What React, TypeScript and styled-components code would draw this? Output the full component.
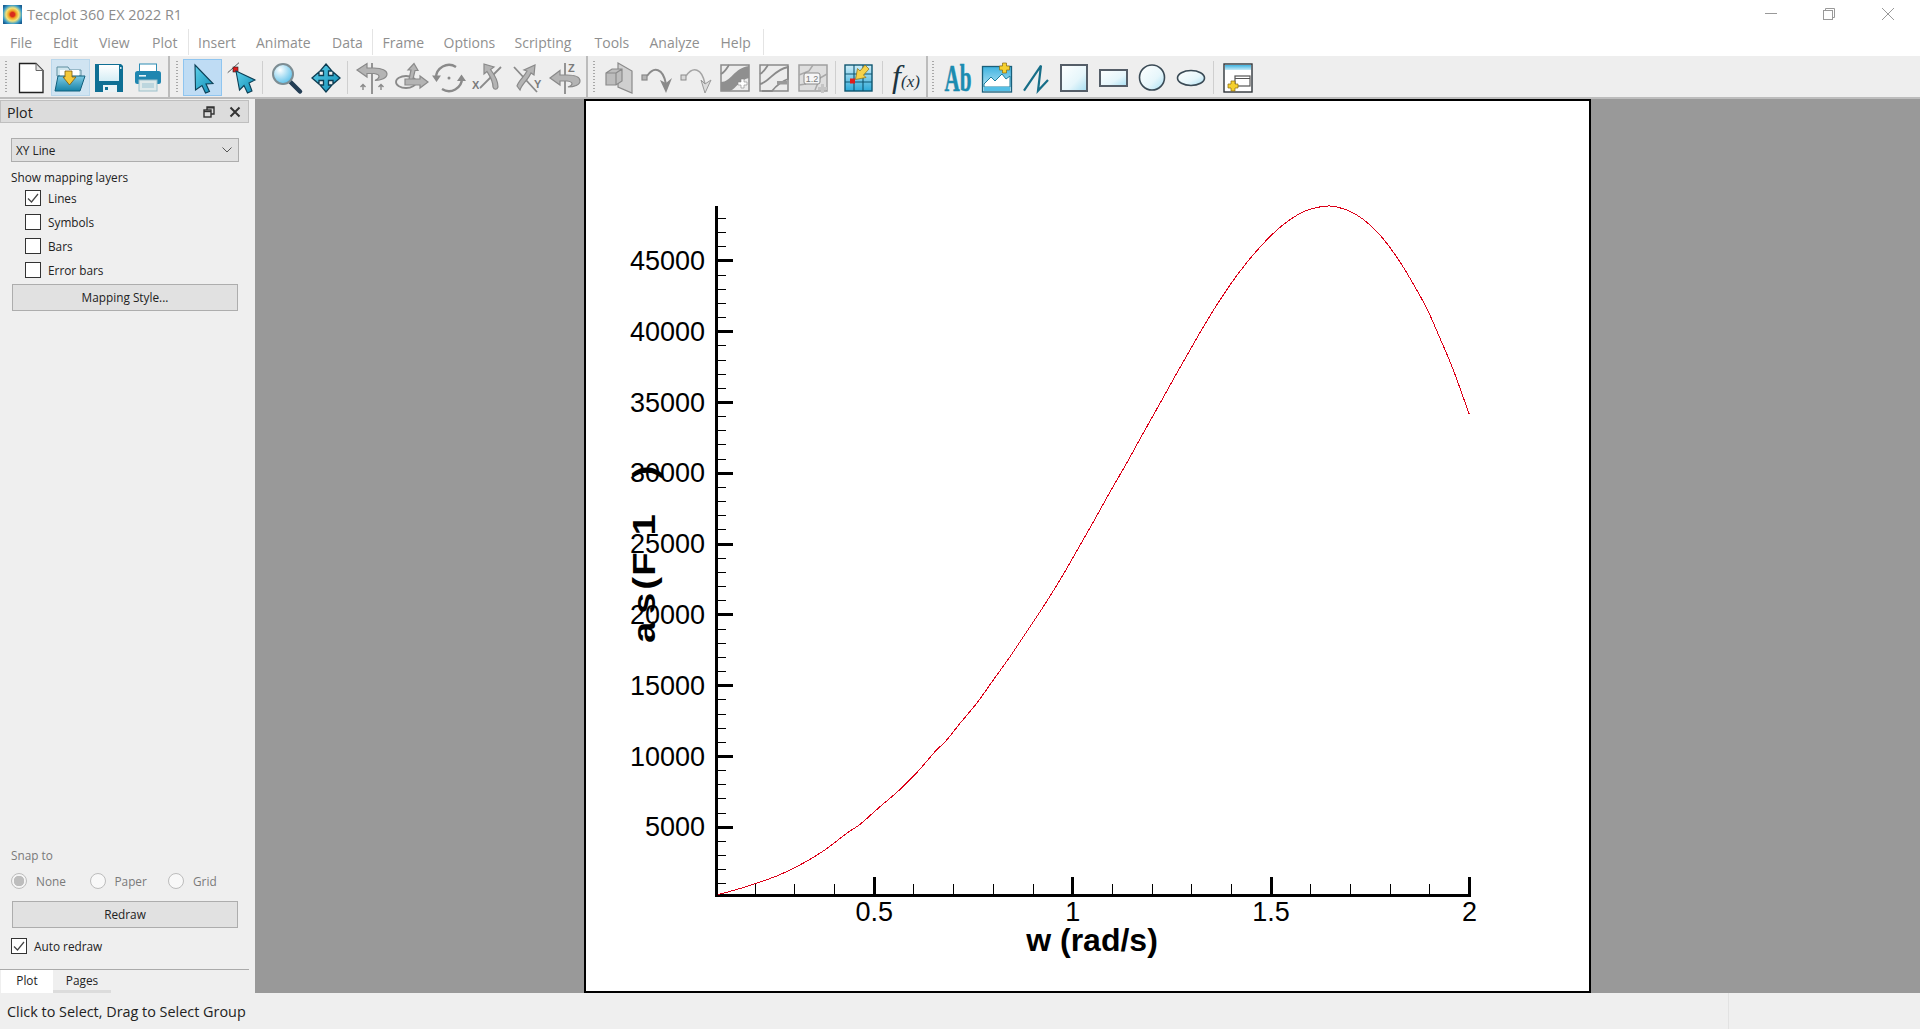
import { ReactElement, ReactNode } from 'react';
import styled, { createGlobalStyle } from 'styled-components';

const GlobalStyle = createGlobalStyle`
  html, body {
    margin: 0;
    padding: 0;
    background: #efefef;
    overflow: hidden;
  }
  * { box-sizing: border-box; }
`;

const UI_FONT = `"Open Sans", "Noto Sans", "Liberation Sans", sans-serif`;

const Window = styled.div`
  color: #222;
  display: flex;
  flex-direction: column;
  font-family: ${UI_FONT};
  height: 1029px;
  overflow: hidden;
  width: 1920px;
`;

/* title bar */
const TitleBar = styled.div`
  align-items: center;
  background: #fff;
  display: flex;
  height: 28px;
  padding-left: 3px;
`;
const AppTitle = styled.span`
  color: #8c8c8c;
  font-size: 14.4px;
  margin-left: 5px;
`;
const WindowButtons = styled.div`
  display: flex;
  margin-left: auto;
  padding-right: 3px;
`;
const WindowButton = styled.div`
  align-items: center;
  display: flex;
  height: 28px;
  justify-content: center;
  width: 58.5px;
`;

/* menu */
const MenuBar = styled.div`
  align-items: center;
  background: #fff;
  display: flex;
  height: 28px;
  padding-left: 10px;
`;
const MenuItem = styled.span<{ $width: number }>`
  color: #8f8f8f;
  font-size: 14px;
  width: ${(p) => p.$width}px;
`;
const MenuSep = styled.span<{ $after: number }>`
  align-self: stretch;
  background: #e4e4e4;
  margin: 1px ${(p) => p.$after}px 1px 0;
  width: 1px;
`;

/* toolbars */
const ToolArea = styled.div`
  background: #eee;
  border-bottom: 2px solid #bcbcbc;
  display: flex;
  height: 43px;
`;
const Bar = styled.div<{ $width?: number; $lead: number }>`
  align-items: center;
  border-right: ${(p) => (p.$width ? '2px solid #bcbcbc' : 'none')};
  display: flex;
  flex: none;
  padding: 2px 0 0 ${(p) => p.$lead}px;
  width: ${(p) => (p.$width ? `${p.$width}px` : 'auto')};
`;
const Handle = styled.span`
  background: repeating-linear-gradient(#a8a8a8 0 1px, transparent 1px 3px);
  flex: none;
  height: 33px;
  margin-right: 5px;
  width: 2px;
`;
const Group = styled.div<{ $pitch: number }>`
  display: flex;
  & > * { width: ${(p) => p.$pitch}px; }
`;
const ToolButton = styled.div<{ $tone?: 'hot' | 'on' }>`
  align-items: center;
  background: ${(p) => (p.$tone === 'on' ? '#bfdcf4' : p.$tone === 'hot' ? '#d0e4f2' : 'transparent')};
  border: 1px solid ${(p) => (p.$tone === 'on' ? '#8fc5f0' : p.$tone === 'hot' ? '#b9d7ec' : 'transparent')};
  display: flex;
  flex: none;
  height: 37px;
  justify-content: center;
`;
const ToolSep = styled.span<{ $before: number; $after: number }>`
  background: #cfcfcf;
  flex: none;
  height: 33px;
  margin: 0 ${(p) => p.$after}px 0 ${(p) => p.$before}px;
  width: 1px;
`;
const Glyph = styled.svg.attrs({ viewBox: '0 0 36 36' })`
  flex: none;
  height: 36px;
  overflow: visible;
  width: 36px;
`;
const IconDefs = styled.svg`
  height: 0;
  position: absolute;
  width: 0;
`;

/* body */
const Body = styled.div`
  display: flex;
  flex: 1;
  min-height: 0;
`;
const Panel = styled.aside`
  background: #efefef;
  display: flex;
  flex: none;
  flex-direction: column;
  font-size: 11.8px;
  padding-right: 6px;
  width: 255px;
`;
const PanelHead = styled.div`
  align-items: center;
  background: #dcdcdc;
  border: 1px solid #bfbfbf;
  display: flex;
  font-size: 14.2px;
  height: 23px;
  margin-top: 1px;
  padding: 1px 7px 0 6px;
`;
const PanelHeadIcons = styled.div`
  align-items: center;
  display: flex;
  gap: 14.5px;
  margin-left: auto;
`;
const Combo = styled.div`
  align-items: center;
  background: #e1e1e1;
  border: 1px solid #adadad;
  display: flex;
  height: 24px;
  justify-content: space-between;
  margin: 15px 10px 0 11px;
  padding: 0 6px 0 4px;
`;
const Caption = styled.div<{ $dim?: boolean; $top: number }>`
  color: ${(p) => (p.$dim ? '#7a7a7a' : '#222')};
  height: 16px;
  line-height: 15px;
  margin: ${(p) => p.$top}px 0 0 11px;
`;
const LayerList = styled.div`
  display: flex;
  flex-direction: column;
  margin-left: 25px;
`;
const CheckRow = styled.label<{ $gap: number }>`
  align-items: center;
  display: flex;
  gap: ${(p) => p.$gap}px;
  height: 24px;
`;
const Box = styled.span`
  align-items: center;
  background: #fff;
  border: 1px solid #333;
  display: flex;
  flex: none;
  height: 16px;
  justify-content: center;
  width: 16px;
`;
const PushButton = styled.div<{ $top: number }>`
  align-items: center;
  background: #e1e1e1;
  border: 1px solid #adadad;
  display: flex;
  flex: none;
  height: 27px;
  justify-content: center;
  margin: ${(p) => p.$top}px 11px 0 12px;
  padding-bottom: 2px;
`;
const SnapSection = styled.div`
  display: flex;
  flex-direction: column;
  margin-top: auto;
`;
const RadioRow = styled.div`
  display: grid;
  grid-template-columns: repeat(3, 78.5px);
  height: 16px;
  margin: 9px 0 0 11px;
`;
const RadioItem = styled.label`
  align-items: center;
  color: #7a7a7a;
  display: flex;
  gap: 9px;
`;
const RadioDot = styled.span<{ $on?: boolean }>`
  background: ${(p) => (p.$on ? 'radial-gradient(circle, #bdbdbd 0 5px, #f4f4f4 5.5px)' : '#f8f8f8')};
  border: 1px solid #bcbcbc;
  border-radius: 50%;
  flex: none;
  height: 16px;
  width: 16px;
`;
const AutoRow = styled(CheckRow)`
  height: 16px;
  margin: 10px 0 0 11px;
`;
const TabRow = styled.div`
  border-top: 1px solid #aaa;
  display: flex;
  height: 24px;
  margin-top: 15px;
  padding-left: 1px;
`;
const Tab = styled.div<{ $current?: boolean; $width: number }>`
  align-items: center;
  background: ${(p) => (p.$current ? '#fff' : 'transparent')};
  border-bottom: 3px solid ${(p) => (p.$current ? '#fff' : '#dcdcdc')};
  display: flex;
  justify-content: center;
  width: ${(p) => p.$width}px;
`;

/* plot canvas */
const Canvas = styled.main`
  background: #999;
  flex: 1;
  padding-left: 329px;
`;
const Frame = styled.div`
  background: #fff;
  border: 2px solid #000;
  height: 100%;
  width: 1007px;
`;
const PlotSvg = styled.svg`
  display: block;
`;

/* status */
const StatusBar = styled.footer`
  align-items: center;
  background: #efefef;
  display: flex;
  font-size: 14.4px;
  height: 36px;
  padding-left: 7px;
`;
const StatusCell = styled.span`
  flex: none;
  width: 1721px;
`;
const StatusRest = styled.span`
  align-self: stretch;
  border-left: 1px solid #e2e2e2;
  flex: 1;
`;

const CURVE = [
  [718, 894.5], [735, 890], [753.3, 884.3], [776.7, 876], [796.7, 866.7], [823.3, 851], [846.7, 833.3],
  [860, 824.3], [880, 806.7], [898.3, 791], [916.7, 772.7], [935, 751.7], [946.7, 740], [960, 723.3],
  [976.7, 703.3], [993.3, 680], [1010, 656.7], [1026.7, 631.7], [1043.3, 606.7], [1060, 580],
  [1076.7, 551], [1093.3, 522], [1110, 492], [1126.7, 463], [1143.3, 433], [1160, 403.3],
  [1176.7, 373.3], [1193.3, 344.2], [1207.7, 319.7], [1220, 300], [1238.3, 273.5], [1258.3, 249],
  [1280, 227.3], [1300, 213.3], [1315, 208], [1330, 206], [1346.7, 210], [1363.3, 219.3], [1380, 235],
  [1396.7, 257], [1410, 278.3], [1426.7, 308.3], [1440, 338.3], [1453.3, 370], [1469.3, 414.3],
];

// smooth the read-off points so the line has no kinks
const curvePath = (pts: number[][]): string => {
  let d = `M${pts[0][0]} ${pts[0][1]}`;
  for (let i = 0; i < pts.length - 1; i++) {
    const a = pts[Math.max(i - 1, 0)];
    const b = pts[i];
    const c = pts[i + 1];
    const e = pts[Math.min(i + 2, pts.length - 1)];
    d += `C${b[0] + (c[0] - a[0]) / 6} ${b[1] + (c[1] - a[1]) / 6} ${c[0] - (e[0] - b[0]) / 6} ${c[1] - (e[1] - b[1]) / 6} ${c[0]} ${c[1]}`;
  }
  return d;
};

const yOf = (v: number) => 827.3 - ((v - 5000) / 5000) * 70.8;
const xOf = (w: number) => 874.3 + (w - 0.5) * 396.8;
const Y_MAJOR = [5000, 10000, 15000, 20000, 25000, 30000, 35000, 40000, 45000];
const Y_MINOR = Array.from({ length: 48 }, (_, i) => (i + 1) * 1000).filter((v) => v % 5000 !== 0);
const X_MINOR = [0.2, 0.3, 0.4, 0.6, 0.7, 0.8, 0.9, 1.1, 1.2, 1.3, 1.4, 1.6, 1.7, 1.8, 1.9];
const X_MAJOR: [number, string][] = [[0.5, '0.5'], [1, '1'], [1.5, '1.5'], [2, '2']];

function Plot(): ReactElement {
  return (
    <PlotSvg width="1003" height="890" viewBox="586 101 1003 890" fontFamily='"Liberation Sans", Arial, sans-serif'>
      <g stroke="#000" shapeRendering="crispEdges">
        <line x1="716.5" y1="206" x2="716.5" y2="897" strokeWidth="3" />
        <line x1="715" y1="895.5" x2="1471" y2="895.5" strokeWidth="3" />
        {Y_MINOR.map((v) => <line key={v} x1="717" y1={yOf(v)} x2="726" y2={yOf(v)} strokeWidth="1" />)}
        {Y_MAJOR.map((v) => <line key={v} x1="717" y1={yOf(v)} x2="733" y2={yOf(v)} strokeWidth="3" />)}
        {X_MINOR.map((w) => <line key={w} x1={xOf(w)} y1="884" x2={xOf(w)} y2="895" strokeWidth="1" />)}
        {X_MAJOR.map(([w]) => <line key={w} x1={xOf(w)} y1="877" x2={xOf(w)} y2="895" strokeWidth="3" />)}
      </g>
      <path fill="none" stroke="#dc0018" strokeWidth="1" shapeRendering="crispEdges" d={curvePath(CURVE)} />
      <g fontSize="27" fill="#000">
        {Y_MAJOR.map((v) => <text key={v} x="705" y={yOf(v) + 9} textAnchor="end">{v}</text>)}
        {X_MAJOR.map(([w, label]) => <text key={w} x={xOf(w)} y="920.5" textAnchor="middle">{label}</text>)}
      </g>
      <text x="1092" y="951" fontSize="32" fontWeight="700" textAnchor="middle">w (rad/s)</text>
      <text transform="translate(655 643) rotate(-90) scale(1.2 1)" fontSize="32" fontWeight="700" dx="0 6.3 2.5 1 14 29.7">as(F1)</text>
    </PlotSvg>
  );
}

const G = { fill: '#b4b4b4', stroke: '#8a8a8a', strokeWidth: 1.2 };
const L = { fill: 'none', stroke: '#8a8a8a', strokeWidth: 1.8 };
const AX = { fontFamily: '"Liberation Sans", sans-serif', fontSize: 11, fontWeight: 700, fill: '#7a7a7a' };

const ICONS: Record<string, ReactNode> = {
  new: (
    <>
      <path d="M6.5 3.5H23L30 10.5V32.5H6.5Z" fill="#fff" stroke="#222" strokeWidth="1.3" />
      <path d="M23 3.5V10.5H30Z" fill="#e4e4e4" stroke="#666" />
    </>
  ),
  open: (
    <>
      <path d="M5 7H16L18 10H29V16H5Z" fill="#cfe6ee" stroke="#5f8ea0" />
      <path d="M8 10H27V18H8Z" fill="#fff" />
      <path d="M6 16H33L28 31H3Z" fill="url(#teal)" stroke="#13607d" />
      <path d="M13 11H20V17H24L17.5 25L11 17H13Z" fill="#f5c93a" stroke="#7a5a10" strokeWidth=".8" />
    </>
  ),
  save: (
    <>
      <path d="M4 4H30L32 6V32H4Z" fill="#0f6f94" />
      <rect x="8" y="5" width="20" height="16" fill="url(#pale)" />
      <rect x="12" y="25" width="14" height="7" fill="#eaf3f6" />
      <rect x="14" y="27" width="3" height="3" fill="#0f6f94" />
      <rect x="29" y="7" width="1.5" height="2" fill="#cfe6ee" />
    </>
  ),
  print: (
    <>
      <rect x="9.5" y="4" width="17" height="8" fill="#fff" stroke="#2c8cb4" />
      <rect x="5" y="11" width="26" height="13" rx="2.5" fill="#1f86b0" />
      <rect x="9" y="15" width="7" height="1.6" fill="#e8f4f8" />
      <rect x="9" y="20" width="18" height="11" fill="#dfe9ea" stroke="#9cc0cb" />
      <rect x="12" y="23" width="12" height="5" fill="#bcd6de" />
    </>
  ),
  pointer: <path d="M10 5L28 23.5L21 24L24.5 31.5L20.5 33L17 25.5L10.5 30Z" fill="url(#cursor)" stroke="#0c3f55" strokeWidth="1.1" />,
  adjust: (
    <>
      <path d="M3.7 12.7L15 2.7" stroke="#444" strokeWidth=".9" />
      <rect x="9" y="7" width="5" height="5" fill="#e01c1c" stroke="#222" strokeWidth=".6" />
      <path d="M12 11L31 20L25 23L28 31L23.5 33L20 25.5L15.5 30Z" fill="url(#cursor)" stroke="#0c3f55" strokeWidth="1.1" />
    </>
  ),
  zoom: (
    <>
      <path d="M21.5 22L31 31.5" stroke="#243e55" strokeWidth="4.5" strokeLinecap="round" />
      <circle cx="14" cy="14" r="10" fill="url(#lens)" stroke="#7d8d93" strokeWidth="2" />
    </>
  ),
  move: <path d="M18 4L24 11H20.5V15.5H25V12L32 18L25 24V20.5H20.5V25H24L18 32L12 25H15.5V20.5H11V24L4 18L11 12V15.5H15.5V11H12Z" fill="url(#cursor)" stroke="#0d3c52" strokeWidth="1.3" />,
  rotP: (
    <>
      <path d="M18 3V34" {...L} />
      <path d="M3 10L13 3.5V8H20C28 8 33 10.5 33 14C33 18 27 20.5 21 20.5C26 18 27 14.5 20 13.5H13V17Z" {...G} />
      <path d="M9 30V25M6.5 27L9 24.5L11.5 27M27 30V25M24.5 27L27 24.5L29.5 27" {...L} strokeWidth="1.4" />
    </>
  ),
  rotT: (
    <>
      <ellipse cx="13" cy="22" rx="10" ry="6" {...L} />
      <path d="M15 24L18 10H15L21 3.5L25 10.5H22L19 23Z" {...G} />
      <path d="M12 19H27V16L35 22L27 28V25H12Z" {...G} />
    </>
  ),
  rotR: (
    <>
      <circle cx="18" cy="18" r="1.5" fill="#8a8a8a" />
      <path d="M5 18A13 13 0 0 1 25 7" {...L} strokeWidth="2.4" />
      <path d="M31 18A13 13 0 0 1 11 29" {...L} strokeWidth="2.4" />
      <path d="M1 15.5H10L5.5 22ZM26 21H35L30.5 14.5Z" fill="#8a8a8a" />
    </>
  ),
  rotX: (
    <>
      <path d="M10 28L31 7" {...L} />
      <path d="M14 4L24 7L20.5 9.5C24 14 28 20 28 27C27 30 24 30 23 27C23 20 19 15 17 11.5L14 14Z" {...G} />
      <text x="2" y="29" {...AX}>X</text>
    </>
  ),
  rotY: (
    <>
      <path d="M5 7L28 32" {...L} />
      <path d="M8 26C10 20 15 17 18 11L15 10L26 5L25 15L22 13C19 20 13 24 11 30Z" {...G} />
      <text x="25" y="28" {...AX}>Y</text>
    </>
  ),
  rotZ: (
    <>
      <path d="M18 3V34" {...L} />
      <path d="M3 18L13 10.5V15H20C28 15 33 17 33 21C33 25 27 27 21 27C26 25 27 22 20 21H13V25Z" {...G} />
      <text x="21" y="12" {...AX}>Z</text>
    </>
  ),
  slice: (
    <>
      <path d="M17 3L31 11V33L17 27Z" fill="#cfcfcf" stroke="#8a8a8a" strokeWidth="1.2" />
      <path d="M5 13L11 9H21V21L15 25H5ZM5 13H15V25M15 13L21 9" {...G} fill="#bdbdbd" />
    </>
  ),
  stepB: (
    <>
      <rect x="2" y="15" width="5" height="5" {...G} />
      <path d="M7 16C14 6 23 8 26 24" {...L} strokeWidth="2" />
      <path d="M20 20L26 33L32 18L26 23Z" fill="#8a8a8a" />
    </>
  ),
  stepL: (
    <>
      <rect x="2" y="15" width="5" height="5" fill="#d8d8d8" stroke="#8a8a8a" />
      <path d="M7 16C14 6 23 8 26 24" {...L} strokeWidth="1.5" stroke="#a4a4a4" />
      <path d="M22 20L26 33L32 20L26 24Z" fill="#dcdcdc" stroke="#9a9a9a" />
    </>
  ),
  levAdd: (
    <>
      <rect x="4" y="5" width="28" height="26" fill="#ececec" stroke="#8a8a8a" strokeWidth="1.5" />
      <path d="M4 22C14 22 17 8 32 6V18C22 20 20 28 13 31H4Z" fill="#8f8f8f" />
      <path d="M4 14C8 12 10 8 12 5" {...L} />
      <path d="M24 19H27V22H30V25H27V28H24V25H21V22H24Z" fill="#fff" stroke="#888" strokeWidth=".6" />
    </>
  ),
  levDel: (
    <>
      <rect x="4" y="5" width="28" height="26" fill="#ececec" stroke="#8a8a8a" strokeWidth="1.5" />
      <path d="M4 14C8 12 10 8 12 5M4 24C14 22 17 10 32 7V19C24 22 20 26 16 31H6" {...L} />
      <rect x="21" y="21" width="10" height="3.5" fill="#9a9a9a" />
    </>
  ),
  levNum: (
    <>
      <rect x="4" y="5" width="28" height="26" fill="#dedede" stroke="#a0a0a0" strokeWidth="1.5" />
      <path d="M4 15L14 11L18 5M20 30L25 18L32 14M4 25L11 24" fill="none" stroke="#a8a8a8" strokeWidth="1.5" />
      <rect x="9" y="13" width="16" height="11" rx="2" fill="#f6f6f6" stroke="#8a8a8a" />
      <text x="17" y="22" textAnchor="middle" fontFamily='"Liberation Sans", sans-serif' fontSize="9" fill="#7a7a7a">1.2</text>
      <path d="M26 24H29V27H32V30H29V33H26V30H23V27H26Z" fill="#c4c4c4" />
    </>
  ),
  probe: (
    <>
      <rect x="4" y="5" width="27" height="26" fill="url(#grid)" stroke="#0f5670" strokeWidth="1.4" />
      <path d="M4 14H31M4 22H31M13 5V31M22 5V31" stroke="#0f5670" strokeWidth="1.1" />
      <path d="M28 9L24 5L19 11L16.5 8.5L14.5 19.5L25 17.5L22.5 15Z" fill="#f5d24a" stroke="#8a6a10" strokeWidth=".7" />
      <rect x="9" y="18.5" width="5" height="5" fill="#e01c1c" />
    </>
  ),
  fx: (
    <text fontFamily='"Liberation Serif", serif' fontStyle="italic" fill="#1c3440">
      <tspan x="5" y="27" fontSize="32">f</tspan>
      <tspan x="14" y="27" fontSize="17">(x)</tspan>
    </text>
  ),
  text: <text x="4.5" y="31" fontFamily='"Liberation Serif", serif' fontWeight="700" fontSize="37" fill="#1c8cb0" stroke="#1c8cb0" strokeWidth=".6" textLength="27" lengthAdjust="spacingAndGlyphs">Ab</text>,
  image: (
    <>
      <rect x="3.5" y="6.5" width="29" height="25.5" fill="url(#sky)" stroke="#1a5f7a" strokeWidth="1.3" />
      <path d="M5 24L12 17L16 21L23 14L27 19L31 16V27H5Z" fill="#fff" stroke="#1a7f9f" strokeWidth="1" />
      <path d="M5 27H31V31H5Z" fill="#54bfe6" />
      <path d="M23.5 3H27.5V6H30.5V10H27.5V13H23.5V10H20.5V6H23.5Z" fill="#f5d02f" stroke="#8a6a10" strokeWidth=".7" />
    </>
  ),
  line: <path d="M6 30.7L23 5.7L20 30.7L30 20" fill="none" stroke="#176e88" strokeWidth="2.2" />,
  square: <rect x="5" y="5" width="26" height="26" fill="url(#shape)" stroke="#555e68" strokeWidth="2" />,
  rect: <rect x="5" y="10" width="27" height="16" fill="url(#shape)" stroke="#555e68" strokeWidth="2" />,
  circle: <circle cx="18" cy="17.5" r="12.5" fill="url(#shape)" stroke="#3a4a55" strokeWidth="1.6" />,
  ellipse: <ellipse cx="18" cy="18" rx="13.5" ry="7.5" fill="url(#shape)" stroke="#3a4a55" strokeWidth="1.6" />,
  frame: (
    <>
      <rect x="4" y="4" width="28" height="28" fill="#fff" stroke="#30363b" strokeWidth="1.4" />
      <rect x="5" y="5" width="26" height="5" fill="url(#sky)" />
      <rect x="15" y="16" width="15" height="10" fill="#fff" stroke="#555" strokeWidth="1.2" />
      <path d="M15 18.5H30" stroke="#555" />
      <path d="M11 21H15V24H18V28H15V31H11V28H8V24H11Z" fill="#f5d02f" stroke="#8a6a10" strokeWidth=".7" />
    </>
  ),
};

function Tool({ name, tone }: { name: string; tone?: 'hot' | 'on' }): ReactElement {
  return (
    <ToolButton $tone={tone}>
      <Glyph>{ICONS[name]}</Glyph>
    </ToolButton>
  );
}

function Check(): ReactElement {
  return (
    <svg width="12" height="10" viewBox="0 0 12 10">
      <path d="M1 5.5L4.5 9L11 1" fill="none" stroke="#444" strokeWidth="1.2" />
    </svg>
  );
}

const MENUS_A: [string, number][] = [['File', 43], ['Edit', 46], ['View', 53], ['Plot', 35.5]];
const MENUS_B: [string, number][] = [['Insert', 58], ['Animate', 76], ['Data', 40]];
const MENUS_C: [string, number][] = [['Frame', 61], ['Options', 71], ['Scripting', 80], ['Tools', 55], ['Analyze', 71], ['Help', 42]];

export default function App(): ReactElement {
  return (
    <Window>
      <GlobalStyle />
      <IconDefs>
        <defs>
          <linearGradient id="teal" x1="0" y1="0" x2="0" y2="1"><stop offset="0" stopColor="#7fcbe4" /><stop offset="1" stopColor="#1682a8" /></linearGradient>
          <linearGradient id="pale" x1="0" y1="0" x2="0" y2="1"><stop offset="0" stopColor="#fff" /><stop offset="1" stopColor="#d5edf5" /></linearGradient>
          <linearGradient id="cursor" x1="0" y1="0" x2="1" y2="1"><stop offset="0" stopColor="#5fd0ea" /><stop offset="1" stopColor="#0f8db5" /></linearGradient>
          <radialGradient id="lens" cx=".35" cy=".3" r=".8"><stop offset="0" stopColor="#fff" /><stop offset="1" stopColor="#4dbbe8" /></radialGradient>
          <linearGradient id="grid" x1="0" y1="0" x2="0" y2="1"><stop offset="0" stopColor="#cfeef9" /><stop offset="1" stopColor="#2ba9d8" /></linearGradient>
          <linearGradient id="sky" x1="0" y1="0" x2="0" y2="1"><stop offset="0" stopColor="#3fb3e0" /><stop offset="1" stopColor="#c9ecf8" /></linearGradient>
          <linearGradient id="shape" x1="0" y1="0" x2="1" y2="1"><stop offset="0" stopColor="#fff" /><stop offset=".6" stopColor="#e6f6fb" /><stop offset="1" stopColor="#a6def2" /></linearGradient>
          <radialGradient id="logo" cx=".5" cy=".5" r=".62"><stop offset=".18" stopColor="#d92b1c" /><stop offset=".32" stopColor="#f0a020" /><stop offset=".55" stopColor="#f2e27a" /><stop offset=".8" stopColor="#3b9dc9" /><stop offset="1" stopColor="#1a5f93" /></radialGradient>
        </defs>
      </IconDefs>

      <TitleBar>
        <svg width="19" height="19" viewBox="0 0 19 19"><rect width="19" height="19" fill="url(#logo)" /></svg>
        <AppTitle>Tecplot 360 EX 2022 R1</AppTitle>
        <WindowButtons>
          <WindowButton>
            <svg width="12" height="12" viewBox="0 0 12 12"><path d="M0 5.5H12" stroke="#999" /></svg>
          </WindowButton>
          <WindowButton>
            <svg width="12" height="12" viewBox="0 0 12 12" fill="none" stroke="#999"><rect x=".5" y="2.5" width="9" height="9" /><path d="M2.5 2.5V.5H11.5V9.5H9.5" /></svg>
          </WindowButton>
          <WindowButton>
            <svg width="12" height="12" viewBox="0 0 12 12"><path d="M0 0L12 12M12 0L0 12" stroke="#999" /></svg>
          </WindowButton>
        </WindowButtons>
      </TitleBar>

      <MenuBar>
        {MENUS_A.map(([m, w]) => <MenuItem key={m} $width={w}>{m}</MenuItem>)}
        <MenuSep $after={9.5} />
        {MENUS_B.map(([m, w]) => <MenuItem key={m} $width={w}>{m}</MenuItem>)}
        <MenuSep $after={9.5} />
        {MENUS_C.map(([m, w]) => <MenuItem key={m} $width={w}>{m}</MenuItem>)}
        <MenuSep $after={0} />
      </MenuBar>

      <ToolArea>
        <Bar $width={170} $lead={4.5}>
          <Handle />
          <Group $pitch={39}>
            <Tool name="new" />
            <Tool name="open" tone="hot" />
            <Tool name="save" />
            <Tool name="print" />
          </Group>
        </Bar>
        <Bar $width={418} $lead={6}>
          <Handle />
          <Group $pitch={39}>
            <Tool name="pointer" tone="on" />
            <Tool name="adjust" />
          </Group>
          <ToolSep $before={1} $after={4} />
          <Group $pitch={39}>
            <Tool name="zoom" />
            <Tool name="move" />
          </Group>
          <ToolSep $before={2} $after={5} />
          <Group $pitch={38.6}>
            <Tool name="rotP" />
            <Tool name="rotT" />
            <Tool name="rotR" />
            <Tool name="rotX" />
            <Tool name="rotY" />
            <Tool name="rotZ" />
          </Group>
        </Bar>
        <Bar $width={340} $lead={4.6}>
          <Handle />
          <Group $pitch={38.8}>
            <Tool name="slice" />
            <Tool name="stepB" />
            <Tool name="stepL" />
            <Tool name="levAdd" />
            <Tool name="levDel" />
            <Tool name="levNum" />
          </Group>
          <ToolSep $before={2.6} $after={3.6} />
          <Group $pitch={38.8}>
            <Tool name="probe" />
          </Group>
          <ToolSep $before={3.6} $after={2.6} />
          <Group $pitch={38.8}>
            <Tool name="fx" />
          </Group>
        </Bar>
        <Bar $lead={3.6}>
          <Handle />
          <Group $pitch={38.8}>
            <Tool name="text" />
            <Tool name="image" />
            <Tool name="line" />
            <Tool name="square" />
            <Tool name="rect" />
            <Tool name="circle" />
            <Tool name="ellipse" />
          </Group>
          <ToolSep $before={2.6} $after={4.6} />
          <Group $pitch={38.8}>
            <Tool name="frame" />
          </Group>
        </Bar>
      </ToolArea>

      <Body>
        <Panel>
          <PanelHead>
            Plot
            <PanelHeadIcons>
              <svg width="12" height="12" viewBox="0 0 12 12" fill="none" stroke="#333" strokeWidth="1.4"><rect x="1" y="4" width="7" height="7" /><path d="M1 5.5H8" /><path d="M4 4V1H11V8H8" /><path d="M4 1.8H11" /></svg>
              <svg width="12" height="12" viewBox="0 0 12 12"><path d="M1.5 1.5L10.5 10.5M10.5 1.5L1.5 10.5" stroke="#333" strokeWidth="2" /></svg>
            </PanelHeadIcons>
          </PanelHead>
          <Combo>
            XY Line
            <svg width="10" height="6" viewBox="0 0 10 6"><path d="M.5 .5L5 5L9.5 .5" fill="none" stroke="#555" /></svg>
          </Combo>
          <Caption $top={8}>Show mapping layers</Caption>
          <LayerList>
            <CheckRow $gap={7}><Box><Check /></Box>Lines</CheckRow>
            <CheckRow $gap={7}><Box />Symbols</CheckRow>
            <CheckRow $gap={7}><Box />Bars</CheckRow>
            <CheckRow $gap={7}><Box />Error bars</CheckRow>
          </LayerList>
          <PushButton $top={2}>Mapping Style...</PushButton>
          <SnapSection>
            <Caption $dim $top={0}>Snap to</Caption>
            <RadioRow>
              <RadioItem><RadioDot $on />None</RadioItem>
              <RadioItem><RadioDot />Paper</RadioItem>
              <RadioItem><RadioDot />Grid</RadioItem>
            </RadioRow>
            <PushButton $top={12}>Redraw</PushButton>
            <AutoRow $gap={7}><Box><Check /></Box>Auto redraw</AutoRow>
            <TabRow>
              <Tab $current $width={52}>Plot</Tab>
              <Tab $width={58}>Pages</Tab>
            </TabRow>
          </SnapSection>
        </Panel>
        <Canvas>
          <Frame>
            <Plot />
          </Frame>
        </Canvas>
      </Body>

      <StatusBar>
        <StatusCell>Click to Select, Drag to Select Group</StatusCell>
        <StatusRest />
      </StatusBar>
    </Window>
  );
}
